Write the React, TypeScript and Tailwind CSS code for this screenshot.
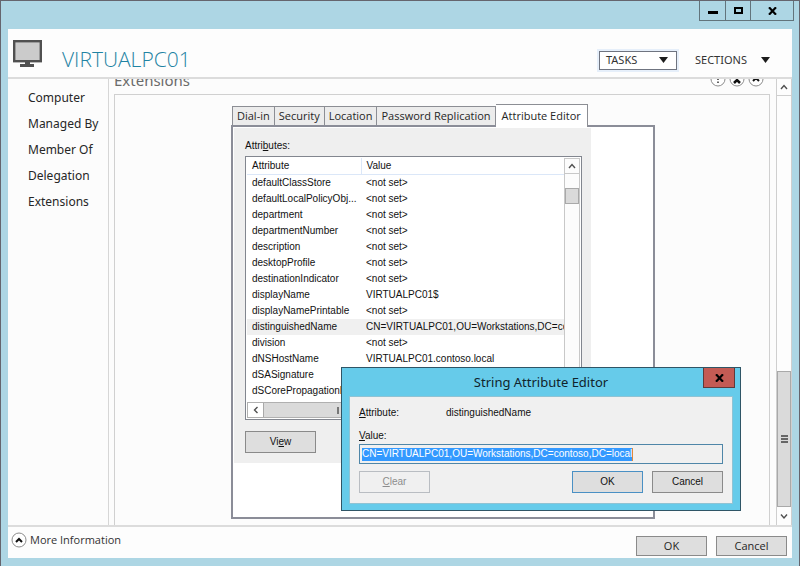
import type { ReactNode } from "react";

interface Attribute {
  name: string;
  value: string;
}

const links = ["Computer", "Managed By", "Member Of", "Delegation", "Extensions"];

const tabs = ["Dial-in", "Security", "Location", "Password Replication"];

const attributes: Attribute[] = [
  { name: "defaultClassStore", value: "<not set>" },
  { name: "defaultLocalPolicyObj...", value: "<not set>" },
  { name: "department", value: "<not set>" },
  { name: "departmentNumber", value: "<not set>" },
  { name: "description", value: "<not set>" },
  { name: "desktopProfile", value: "<not set>" },
  { name: "destinationIndicator", value: "<not set>" },
  { name: "displayName", value: "VIRTUALPC01$" },
  { name: "displayNamePrintable", value: "<not set>" },
  { name: "distinguishedName", value: "CN=VIRTUALPC01,OU=Workstations,DC=contoso,DC=local" },
  { name: "division", value: "<not set>" },
  { name: "dNSHostName", value: "VIRTUALPC01.contoso.local" },
  { name: "dSASignature", value: "" },
  { name: "dSCorePropagationD...", value: "" },
];

const selected = "distinguishedName";

function Chevron({ d }: { d: string }) {
  return (
    <svg className="w-2 h-2" viewBox="0 0 8 8" fill="none" stroke="#505050" strokeWidth="1.4">
      <path d={d} />
    </svg>
  );
}

function Triangle() {
  return (
    <svg className="w-[9px] h-[6px]" viewBox="0 0 9 6" fill="#1c1c1c">
      <path d="M0 0h9L4.5 6z" />
    </svg>
  );
}

function RoundIcon({ children }: { children: ReactNode }) {
  return (
    <svg className="w-4 h-4 block" viewBox="0 0 16 16" fill="none">
      <circle cx="8" cy="8" r="7" fill="#fff" stroke="#8c8c8c" />
      {children}
    </svg>
  );
}

function CloseX() {
  return (
    <svg className="w-[9px] h-2" viewBox="0 0 9 8" fill="none" stroke="#000" strokeWidth="2.2">
      <path d="M1 .3l7 7.4M8 .3L1 7.7" />
    </svg>
  );
}

interface PushButtonProps {
  children: ReactNode;
  className?: string;
  disabled?: boolean;
}

function PushButton({ children, className = "border-[#8a8a8a] bg-[#dedede]", disabled }: PushButtonProps) {
  return (
    <button disabled={disabled} className={`flex w-[71px] items-center justify-center border ${className}`}>
      <span>{children}</span>
    </button>
  );
}

function Header() {
  return (
    <header className="flex h-[50px] shrink-0 items-center border-b-2 border-[#dcdcdc] bg-[#fdfdfd] pl-[5px] pr-[22px]">
      <svg className="w-[29px] h-[27px]" viewBox="0 0 29 27">
        <rect x="1.2" y="1.2" width="26.6" height="20" fill="#cbcbcb" stroke="#505050" strokeWidth="2.4" />
        <path d="M12 22h5v2h4v3H7v-3h5z" fill="#505050" />
      </svg>
      <h1 className="ml-5 mt-3 font-['Open_Sans'] text-[21px] font-light leading-7 text-[#1f83a3]">VIRTUALPC01</h1>
      <div className="ml-auto mt-3.5 flex items-center text-[11px] text-[#333]">
        <button className="flex h-[19px] w-[78px] items-center justify-between border border-[#6f7480] bg-white pl-1.5 pr-2 outline-2 outline-[#e6effa]">
          TASKS <Triangle />
        </button>
        <button className="ml-[18px] flex w-[75px] items-center justify-between">
          SECTIONS <Triangle />
        </button>
      </div>
    </header>
  );
}

function AttributeList() {
  return (
    <div className="mt-0.5 flex h-[264px] w-[337px] flex-col border border-[#82868f] bg-white p-px">
      <div className="flex min-h-0 flex-1">
        <div className="min-w-0 flex-1 overflow-hidden">
          <table className="w-full table-fixed border-collapse text-left">
            <thead>
              <tr className="border-b border-[#dbe7f8]">
                <th className="w-[114px] border-r border-[#dbe7f8] pl-[5px] font-normal">Attribute</th>
                <th className="pl-[5px] font-normal">Value</th>
              </tr>
            </thead>
            <tbody>
              {attributes.map((attribute) => (
                <tr key={attribute.name} className={attribute.name === selected ? "h-4 bg-[#f0f0f0]" : "h-4"}>
                  <td className="overflow-hidden whitespace-nowrap pl-[5px]">{attribute.name}</td>
                  <td className="overflow-hidden whitespace-nowrap pl-[5px]">{attribute.value}</td>
                </tr>
              ))}
            </tbody>
          </table>
        </div>
        <div className="flex w-4 flex-col border-x border-[#c8c8c8] bg-[#fcfcfc]">
          <button aria-label="Scroll up" className="flex h-4 items-center justify-center border-y border-[#c8c8c8]">
            <Chevron d="M1 6l3-3.5L7 6" />
          </button>
          <div className="mt-3.5 h-4 border border-[#a9a9a9] bg-[#dadada]" />
        </div>
      </div>
      <div className="mr-4 flex h-4 border border-[#b0b0b0]">
        <button aria-label="Scroll left" className="flex w-[15px] items-center justify-center bg-white">
          <Chevron d="M5.5 1L2.5 4l3 3" />
        </button>
        <div className="flex w-[155px] items-center justify-center border-x border-[#a9a9a9] bg-[#dadada]">
          <div className="h-[7px] w-[7px] border-x-2 border-[#777]" />
        </div>
      </div>
    </div>
  );
}

function AttributeEditor() {
  return (
    <section className="ml-[116px] mt-[9px] w-[424px]">
      <div role="tablist" className="flex items-end pl-px font-['Open_Sans',sans-serif] text-[11px]">
        {tabs.map((tab) => (
          <button
            key={tab}
            role="tab"
            className="h-[19px] shrink-0 border border-b-0 border-[#8c8e94] bg-[#ececec] px-1 leading-[18px] not-first:border-l-0"
          >
            {tab}
          </button>
        ))}
        <button
          role="tab"
          aria-selected="true"
          className="relative -mb-0.5 h-[23px] shrink-0 border border-b-0 border-l-0 border-[#8c8e94] bg-white px-1.5"
        >
          Attribute Editor
        </button>
      </div>
      <div className="h-[394px] border-2 border-[#8b8d98] bg-white p-px">
        <div className="h-[335px] w-[357px] bg-[#efefef] pl-[11px] pt-2.5 font-['Liberation_Sans',sans-serif] text-[10px] leading-4 text-[#111]">
          <p>
            Attri<u>b</u>utes:
          </p>
          <AttributeList />
          <PushButton className="mt-[11px] h-[22px] border-[#8a8a8a] bg-[#dedede]">
            Vi<u>e</u>w
          </PushButton>
        </div>
      </div>
    </section>
  );
}

function StringEditor() {
  return (
    <div
      role="dialog"
      aria-labelledby="editor-title"
      className="absolute left-[340px] top-[366px] w-[400px] border border-[#2f5566] bg-[#66cbea] px-[7px] pb-1.5"
    >
      <div className="flex h-[28px] justify-center">
        <h2 id="editor-title" className="text-[13px] leading-[28px] text-[#10242c]">
          String Attribute Editor
        </h2>
        <button
          aria-label="Close"
          className="absolute right-[5px] top-0 flex h-5 w-8 items-center justify-center border border-t-0 border-[#5f3a3a] bg-[#c35b54]"
        >
          <CloseX />
        </button>
      </div>
      <div className="h-[108px] border border-[#8fc3d4] bg-[#f0f0f0] px-[9px] pt-2 font-['Liberation_Sans',sans-serif] text-[10px] leading-4 text-[#111]">
        <div className="flex">
          <span className="w-[87px]">
            <u>A</u>ttribute:
          </span>
          <span>distinguishedName</span>
        </div>
        <label htmlFor="value" className="mt-[7px] block">
          <u>V</u>alue:
        </label>
        <div className="flex h-5 items-center border border-[#4f86a8] bg-[#f0f0f0] pl-0.5">
          <input
            id="value"
            type="text"
            className="h-[13px] field-sizing-content border-r border-[#e08a3c] bg-[#3399ff] text-white outline-none"
            defaultValue="CN=VIRTUALPC01,OU=Workstations,DC=contoso,DC=local"
          />
        </div>
        <div className="mt-[7px] flex gap-[9px]">
          <PushButton disabled className="mr-auto h-[22px] border-[#b9bdc2] bg-[#f0f0f0] text-[#8d8d8d]">
            <u>C</u>lear
          </PushButton>
          <PushButton className="h-[22px] border-[#4a90c4] bg-[#dedede]">OK</PushButton>
          <PushButton className="h-[22px] border-[#8a8a8a] bg-[#dedede]">Cancel</PushButton>
        </div>
      </div>
    </div>
  );
}

export default function App() {
  return (
    <div className="relative flex h-screen flex-col overflow-hidden border border-b-0 border-[#65656e] bg-[#add6e4] pb-2 font-['Noto_Sans',sans-serif] text-[12px] text-[#262626]">
      <div className="flex h-7 shrink-0 items-start justify-end pr-[5px]">
        <div className="flex h-5 border border-t-0 border-[#62747c]">
          <button aria-label="Minimize" className="flex w-[26px] items-center justify-center border-r border-[#62747c]">
            <span className="mt-1 h-[3px] w-2.5 bg-black" />
          </button>
          <button aria-label="Maximize" className="flex w-[25px] items-center justify-center border-r border-[#62747c]">
            <span className="h-[7px] w-[9px] border-2 border-black" />
          </button>
          <button aria-label="Close" className="flex w-[42px] items-center justify-center">
            <CloseX />
          </button>
        </div>
      </div>
      <div className="mx-[7px] flex min-h-0 flex-1 flex-col bg-[#fcfcfc]">
        <Header />
        <main className="flex min-h-0 flex-1">
          <nav className="w-[101px] shrink-0 border-r border-[#d6d6d6] pl-5 pt-1.5">
            {links.map((link) => (
              <a key={link} href="#" className="block whitespace-nowrap leading-[26px]">
                {link}
              </a>
            ))}
          </nav>
          <div className="flex min-w-0 flex-1 flex-col overflow-hidden pl-[5px] pr-1.5">
            <div className="-mt-2.5 flex h-[25px] shrink-0 items-start justify-between pr-1.5">
              <h2 className="text-[15px] leading-[22px] text-[#6b6b6b]">Extensions</h2>
              <div className="flex gap-[3px] pt-0.5">
                <RoundIcon>
                  <path d="M8 4v5M8 10.500v1.500" stroke="#333" strokeWidth="1.500" />
                </RoundIcon>
                <RoundIcon>
                  <path d="M5 12l3-3 3 3" stroke="#111" strokeWidth="2.500" />
                </RoundIcon>
                <RoundIcon>
                  <path d="M5 10l3-3 3 3" stroke="#111" strokeWidth="2" />
                </RoundIcon>
              </div>
            </div>
            <div className="min-h-0 flex-1 border border-b-0 border-[#d0d0d0]">
              <AttributeEditor />
            </div>
          </div>
          <div className="flex w-4 shrink-0 flex-col border-x border-[#cfcfcf] bg-[#fdfdfd]">
            <button aria-label="Scroll up" className="flex h-[17px] items-center justify-center border-b border-[#cfcfcf]">
              <Chevron d="M1 6l3-3.500L7 6" />
            </button>
            <div className="mt-auto flex h-[136px] items-center justify-center border border-[#a9a9a9] bg-[#dadada]">
              <svg className="w-[7px] h-2" viewBox="0 0 7 8" fill="#666">
                <path d="M0 0h7v2H0zM0 3h7v2H0zM0 6h7v2H0z" />
              </svg>
            </div>
            <button aria-label="Scroll down" className="flex h-[18px] items-center justify-center">
              <Chevron d="M1 2.500L4 6l3-3.500" />
            </button>
          </div>
        </main>
        <footer className="flex h-[33px] shrink-0 items-start border-t-2 border-[#dcdcdc] bg-[#fdfdfd] pl-[3px] pr-[5px] font-['Open_Sans',sans-serif] text-[11px]">
          <button className="mt-[5px] flex items-center gap-[3px] text-[#333]">
            <RoundIcon>
              <path d="M5 10l3-3 3 3" stroke="#111" strokeWidth="2" />
            </RoundIcon>
            More Information
          </button>
          <div className="ml-auto mt-[9px] flex gap-[9px]">
            <PushButton className="h-5 border-[#8a8a8a] bg-[#dedede]">OK</PushButton>
            <PushButton className="h-5 border-[#8a8a8a] bg-[#dedede]">Cancel</PushButton>
          </div>
        </footer>
      </div>
      <StringEditor />
    </div>
  );
}
